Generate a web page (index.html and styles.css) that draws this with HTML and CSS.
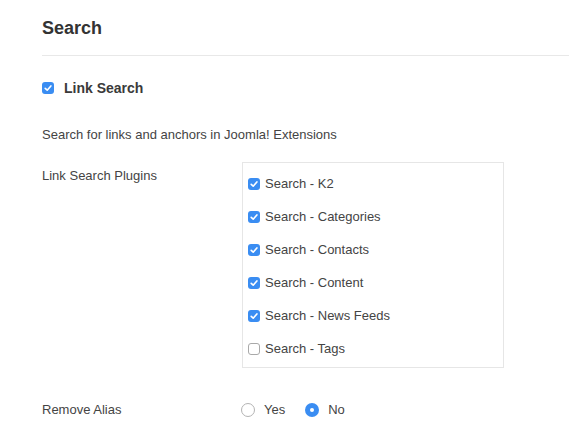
FILE: index.html
```html
<!DOCTYPE html>
<html lang="en">
<head>
<meta charset="utf-8">
<title>Search</title>
<link rel="stylesheet" href="styles.css">
</head>
<body>
<div class="panel">
  <h2 class="title">Search</h2>

  <label class="toggle-row">
    <span class="cb checked"><svg viewBox="0 0 12 12" width="12" height="12"><path d="M3.2 6.3 L5.2 8.2 L8.9 3.9" fill="none" stroke="#fff" stroke-width="1.6" stroke-linecap="round" stroke-linejoin="round"/></svg></span>
    <span class="toggle-text">Link Search</span>
  </label>

  <p class="desc">Search for links and anchors in Joomla! Extensions</p>

  <div class="field">
    <div class="field-label plugins-label">Link Search Plugins</div>
    <div class="plugin-box">
      <div class="plugin"><span class="cb checked"><svg viewBox="0 0 12 12" width="12" height="12"><path d="M3.2 6.3 L5.2 8.2 L8.9 3.9" fill="none" stroke="#fff" stroke-width="1.6" stroke-linecap="round" stroke-linejoin="round"/></svg></span><span>Search - K2</span></div>
      <div class="plugin"><span class="cb checked"><svg viewBox="0 0 12 12" width="12" height="12"><path d="M3.2 6.3 L5.2 8.2 L8.9 3.9" fill="none" stroke="#fff" stroke-width="1.6" stroke-linecap="round" stroke-linejoin="round"/></svg></span><span>Search - Categories</span></div>
      <div class="plugin"><span class="cb checked"><svg viewBox="0 0 12 12" width="12" height="12"><path d="M3.2 6.3 L5.2 8.2 L8.9 3.9" fill="none" stroke="#fff" stroke-width="1.6" stroke-linecap="round" stroke-linejoin="round"/></svg></span><span>Search - Contacts</span></div>
      <div class="plugin"><span class="cb checked"><svg viewBox="0 0 12 12" width="12" height="12"><path d="M3.2 6.3 L5.2 8.2 L8.9 3.9" fill="none" stroke="#fff" stroke-width="1.6" stroke-linecap="round" stroke-linejoin="round"/></svg></span><span>Search - Content</span></div>
      <div class="plugin"><span class="cb checked"><svg viewBox="0 0 12 12" width="12" height="12"><path d="M3.2 6.3 L5.2 8.2 L8.9 3.9" fill="none" stroke="#fff" stroke-width="1.6" stroke-linecap="round" stroke-linejoin="round"/></svg></span><span>Search - News Feeds</span></div>
      <div class="plugin"><span class="cb"></span><span>Search - Tags</span></div>
    </div>
  </div>

  <div class="field alias-field">
    <div class="field-label">Remove Alias</div>
    <div class="radios">
      <span class="radio-opt"><span class="radio"></span><span>Yes</span></span>
      <span class="radio-opt"><span class="radio on"></span><span>No</span></span>
    </div>
  </div>
</div>
</body>
</html>
```

FILE: styles.css
```css
html, body {
  margin: 0;
  padding: 0;
  background: #fff;
}

body {
  font-family: "Liberation Sans", Arial, Helvetica, sans-serif;
  color: #444;
  font-size: 13px;
}

.panel {
  padding-left: 42px;
}

.title {
  margin: 0;
  padding: 18px 0 17px;
  font-size: 18px;
  line-height: 20px;
  font-weight: bold;
  color: #333;
  border-bottom: 1px solid #e8e8e8;
}

.toggle-row {
  display: flex;
  align-items: center;
  height: 20px;
  margin-top: 22px;
}

.toggle-text {
  margin-left: 10px;
  font-size: 14px;
  font-weight: bold;
  color: #3a3a3a;
}

.cb {
  display: inline-flex;
  box-sizing: border-box;
  width: 12px;
  height: 12px;
  border-radius: 3px;
  border: 1px solid #a9a9a9;
  background: #fff;
  flex: none;
}

.cb.checked {
  border: none;
  background: #3a8df2;
}

.desc {
  margin: 28px 0 0;
  line-height: 18px;
}

.field {
  display: grid;
  grid-template-columns: 200px auto;
  margin-top: 18px;
  line-height: 18px;
}

.plugins-label {
  padding-top: 5px;
}

.plugin-box {
  justify-self: start;
  width: 260px;
  border: 1px solid #e6e6e6;
  padding: 4px 0 2px;
}

.plugin {
  display: flex;
  align-items: center;
  gap: 5px;
  height: 33px;
  padding-left: 5px;
}

.alias-field {
  margin-top: 33px;
  align-items: center;
}

.radios {
  display: flex;
  align-items: center;
  gap: 20px;
  margin-left: -1px;
}

.radio-opt {
  display: inline-flex;
  align-items: center;
  gap: 9px;
}

.radio {
  display: inline-flex;
  align-items: center;
  justify-content: center;
  box-sizing: border-box;
  width: 14px;
  height: 14px;
  border-radius: 50%;
  border: 1px solid #b3b3b3;
  background: #fff;
}

.radio.on {
  border: none;
  background: #3a8df2;
}

.radio.on::after {
  content: "";
  width: 4px;
  height: 4px;
  border-radius: 50%;
  background: #fff;
}
```
